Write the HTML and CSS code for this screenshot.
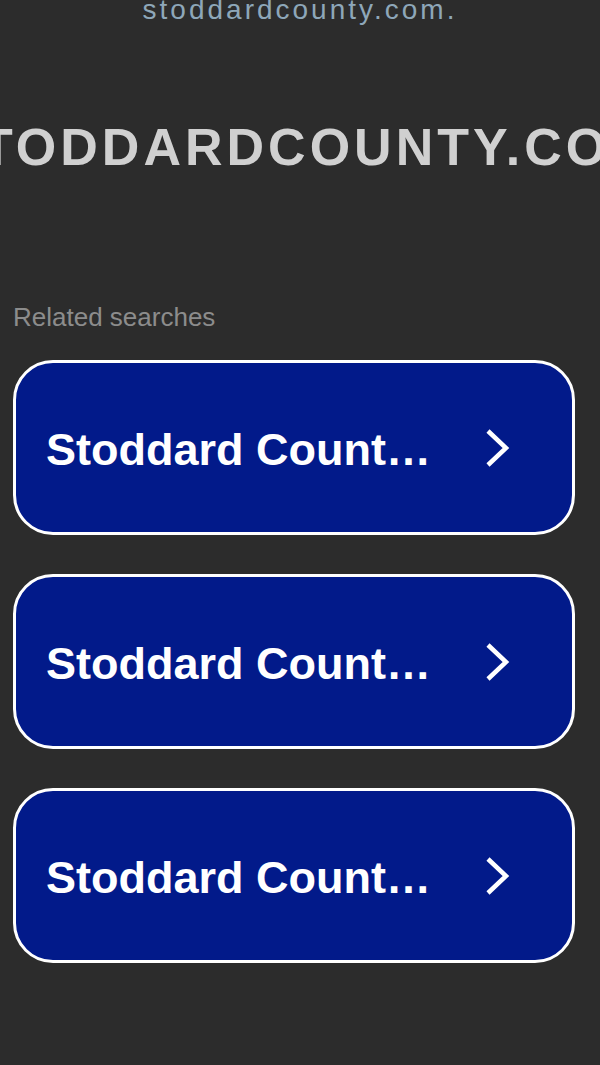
FILE: index.html
```html
<!DOCTYPE html>
<html lang="en">
<head>
    <meta charset="UTF-8">
    <meta name="viewport" content="width=device-width, initial-scale=1.0">
    <title>stoddardcounty.com</title>
    <link rel="stylesheet" href="styles.css">
</head>
<body>
    <header>
        <p class="domain-note">stoddardcounty.com.</p>
        <div class="domain-title">
            <h1>STODDARDCOUNTY.COM</h1>
        </div>
    </header>
    <main>
        <h2 class="related-title">Related searches</h2>
        <a class="search-link" href="#">
            <span class="search-text">Stoddard County Missouri</span>
            <svg class="chevron" viewBox="0 0 26 40" width="26" height="40">
                <polyline points="3,3 21,20 3,37" fill="none" stroke="#fff" stroke-width="4.5"/>
            </svg>
        </a>
        <a class="search-link" href="#">
            <span class="search-text">Stoddard County Jail</span>
            <svg class="chevron" viewBox="0 0 26 40" width="26" height="40">
                <polyline points="3,3 21,20 3,37" fill="none" stroke="#fff" stroke-width="4.5"/>
            </svg>
        </a>
        <a class="search-link" href="#">
            <span class="search-text">Stoddard County Court Records</span>
            <svg class="chevron" viewBox="0 0 26 40" width="26" height="40">
                <polyline points="3,3 21,20 3,37" fill="none" stroke="#fff" stroke-width="4.5"/>
            </svg>
        </a>
    </main>
</body>
</html>
```

FILE: styles.css
```css
body {
    margin: 0;
    padding: 0;
    background-color: #2c2c2c;
    font-family: "Liberation Sans", Arial, sans-serif;
    overflow: hidden;
}

.domain-note {
    margin: -4px 0 0;
    font-size: 28px;
    line-height: 28px;
    letter-spacing: 3px;
    color: #8ea7b9;
    text-align: center;
}

.domain-title {
    display: flex;
    justify-content: center;
    overflow: hidden;
    margin-top: 93px;
}

.domain-title h1 {
    margin: 0;
    font-size: 52px;
    line-height: 60px;
    font-weight: bold;
    letter-spacing: 4px;
    color: #d0d0d0;
    white-space: nowrap;
}

main {
    padding: 0 25px 0 13px;
    margin-top: 125px;
}

.related-title {
    margin: 0 0 28px;
    font-size: 26px;
    line-height: 30px;
    font-weight: normal;
    color: #8c8c8c;
}

.search-link {
    display: flex;
    align-items: center;
    gap: 40px;
    height: 169px;
    margin-bottom: 39px;
    padding: 0 61px 0 30px;
    background-color: #021a8a;
    border: 3px solid #fff;
    border-radius: 40px;
    color: #fff;
    text-decoration: none;
}

.search-text {
    flex: 1;
    min-width: 0;
    padding-top: 4px;
    font-size: 45px;
    font-weight: bold;
    white-space: nowrap;
    overflow: hidden;
    text-overflow: ellipsis;
}

.chevron {
    flex-shrink: 0;
}
```
